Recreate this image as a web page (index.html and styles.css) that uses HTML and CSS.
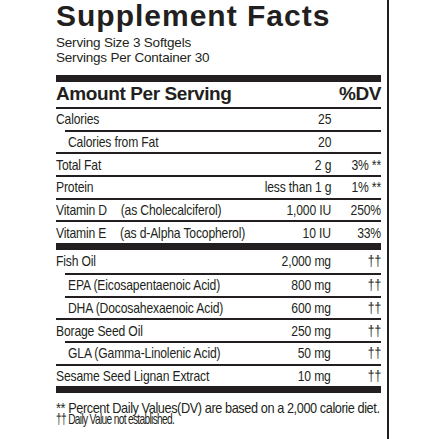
FILE: index.html
```html
<!DOCTYPE html>
<html lang="en">

<head>
    <meta charset="UTF-8">
    <meta name="viewport" content="width=device-width, initial-scale=1.0">
    <title>Supplement Facts</title>
    <link rel="stylesheet" href="styles.css">
</head>

<body>
    <div class="painel">
        <div class="rotulo">
            <h1>Supplement Facts</h1>
            <p class="porcao">Serving Size 3 Softgels</p>
            <p class="porcao">Servings Per Container 30</p>
            <div class="barra"></div>
            <div class="cabecalho">
                <span>Amount Per Serving</span>
                <span>%DV</span>
            </div>

            <div class="linha"><span>Calories</span><span class="qtd">25</span><span class="dv"></span></div>
            <div class="linha sub"><span>Calories from Fat</span><span class="qtd">20</span><span class="dv"></span></div>
            <div class="linha"><span>Total Fat</span><span class="qtd">2 g</span><span class="dv">3% **</span></div>
            <div class="linha"><span>Protein</span><span class="qtd">less than 1 g</span><span class="dv">1% **</span></div>
            <div class="linha"><span>Vitamin D <span class="fonte">(as Cholecalciferol)</span></span><span class="qtd">1,000 IU</span><span class="dv">250%</span></div>
            <div class="linha"><span>Vitamin E <span class="fonte">(as d-Alpha Tocopherol)</span></span><span class="qtd">10 IU</span><span class="dv">33%</span></div>
            <div class="barra media"></div>
            <div class="linha sem-borda"><span>Fish Oil</span><span class="qtd">2,000 mg</span><span class="dv">††</span></div>
            <div class="linha sub"><span>EPA (Eicosapentaenoic Acid)</span><span class="qtd">800 mg</span><span class="dv">††</span></div>
            <div class="linha sub"><span>DHA (Docosahexaenoic Acid)</span><span class="qtd">600 mg</span><span class="dv">††</span></div>
            <div class="linha"><span>Borage Seed Oil</span><span class="qtd">250 mg</span><span class="dv">††</span></div>
            <div class="linha sub"><span>GLA (Gamma-Linolenic Acid)</span><span class="qtd">50 mg</span><span class="dv">††</span></div>
            <div class="linha"><span>Sesame Seed Lignan Extract</span><span class="qtd">10 mg</span><span class="dv">††</span></div>
            <div class="barra media"></div>

            <div class="notas">
                <p class="nota">** Percent Daily Values(DV) are based on a 2,000 calorie diet.</p>
                <p class="nota estreita">†† Daily Value not established.</p>
            </div>
        </div>
    </div>
</body>
</html>
```

FILE: styles.css
```css
body {
    margin: 0;
    background-color: #ffffff;
    color: #231f20;
    font-family: "Liberation Sans", Arial, sans-serif;
}

.painel {
    width: 331px;
    min-height: 100vh;
    padding-left: 56px;
    border-right: 2px solid #231f20;
}

.rotulo {
    width: 325px;
}

h1 {
    margin: 0;
    padding-top: 1px;
    height: 34px;
    font-weight: bold;
    font-size: 30px;
    letter-spacing: 1px;
    line-height: 30px;
}

.porcao {
    margin: 0;
    font-size: 13.5px;
    letter-spacing: -0.2px;
    line-height: 15px;
    height: 15px;
}

.barra {
    height: 7px;
    background: #231f20;
    margin-top: 10px;
}

.barra.media {
    margin-top: 0;
}

.cabecalho {
    display: flex;
    justify-content: space-between;
    align-items: flex-end;
    height: 25px;
    box-sizing: border-box;
    padding-bottom: 3px;
    font-weight: bold;
    font-size: 19px;
    letter-spacing: -0.4px;
    line-height: 20px;
}

.linha {
    display: grid;
    grid-template-columns: 1fr auto 50px;
    align-items: center;
    height: 22.7px;
    box-sizing: border-box;
    border-top: 2px solid #231f20;
    font-size: 15px;
    letter-spacing: -0.2px;
    line-height: 18px;
    white-space: nowrap;
}

.linha > span {
    transform: scaleX(0.81);
    transform-origin: left center;
}

.linha > .qtd,
.linha > .dv {
    text-align: right;
    transform-origin: right center;
}

.linha.sub {
    margin-left: 9px;
    padding-left: 3px;
}

.linha.sem-borda {
    border-top: 0;
}

.fonte {
    margin-left: 13px;
}

.notas {
    margin-top: 9px;
}

.nota {
    margin: 0;
    font-size: 15px;
    line-height: 11px;
    letter-spacing: -0.5px;
    white-space: nowrap;
    transform: scaleX(0.85);
    transform-origin: left top;
}

.nota.estreita {
    letter-spacing: -1px;
    transform: scaleX(0.68);
}
```
